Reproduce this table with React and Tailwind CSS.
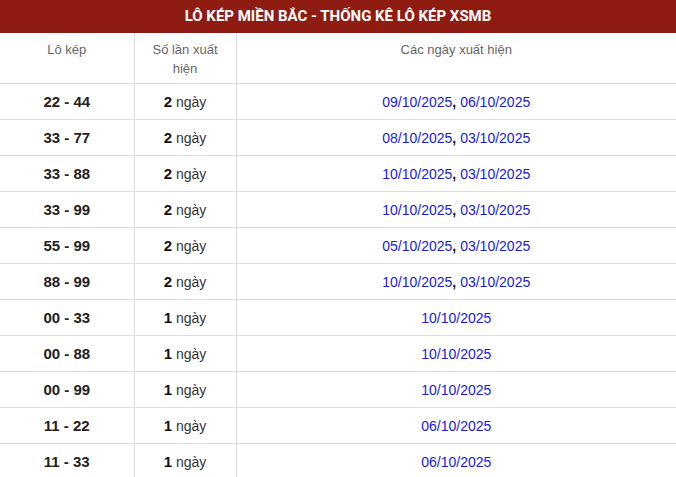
const rows = [
  ["22 - 44", 2, ["09/10/2025", "06/10/2025"]],
  ["33 - 77", 2, ["08/10/2025", "03/10/2025"]],
  ["33 - 88", 2, ["10/10/2025", "03/10/2025"]],
  ["33 - 99", 2, ["10/10/2025", "03/10/2025"]],
  ["55 - 99", 2, ["05/10/2025", "03/10/2025"]],
  ["88 - 99", 2, ["10/10/2025", "03/10/2025"]],
  ["00 - 33", 1, ["10/10/2025"]],
  ["00 - 88", 1, ["10/10/2025"]],
  ["00 - 99", 1, ["10/10/2025"]],
  ["11 - 22", 1, ["06/10/2025"]],
  ["11 - 33", 1, ["06/10/2025"]],
];

export default function App() {
  return (
    <div className="w-[676px] bg-white" style={{ fontFamily: '"Liberation Sans", Arial, sans-serif' }}>
      <div
        className="h-[33px] bg-[#8f1c12] text-white flex items-center justify-center text-[15px] font-bold"
        style={{ fontFamily: 'Roboto, "Liberation Sans", sans-serif' }}
      >
        LÔ KÉP MIỀN BẮC - THỐNG KÊ LÔ KÉP XSMB
      </div>
      <table className="w-full border-collapse table-fixed">
        <colgroup>
          <col className="w-[134px]" />
          <col className="w-[102px]" />
          <col />
        </colgroup>
        <thead>
          <tr className="h-[50px] border-b border-[#dddddd]">
            <th className="align-top font-normal text-[13px] leading-[19px] text-[#666666] pt-[7px] px-2 border-r border-[#dddddd]">Lô kép</th>
            <th className="align-top font-normal text-[13px] leading-[19px] text-[#666666] pt-[7px] px-3 border-r border-[#dddddd]">Số lần xuất hiện</th>
            <th className="align-top font-normal text-[13px] leading-[19px] text-[#666666] pt-[7px] px-2">Các ngày xuất hiện</th>
          </tr>
        </thead>
        <tbody>
          {rows.map(([pair, n, dates]) => (
            <tr key={pair} className="h-[36px] border-b border-[#dddddd]">
              <td className="text-center font-bold text-[15px] text-[#222222] pt-[2px] border-r border-[#dddddd]">{pair}</td>
              <td className="text-center text-[14px] text-[#333333] pt-[2px] border-r border-[#dddddd]">
                <span className="font-bold text-[15px] text-[#111111]">{n}</span> ngày
              </td>
              <td className="text-center text-[14px] text-[#1a1adb] pt-[2px]">
                {dates.map((d, i) => (
                  <span key={i}>
                    {i > 0 && <span className="font-bold text-[#111133]">, </span>}
                    {d}
                  </span>
                ))}
              </td>
            </tr>
          ))}
        </tbody>
      </table>
    </div>
  );
}
